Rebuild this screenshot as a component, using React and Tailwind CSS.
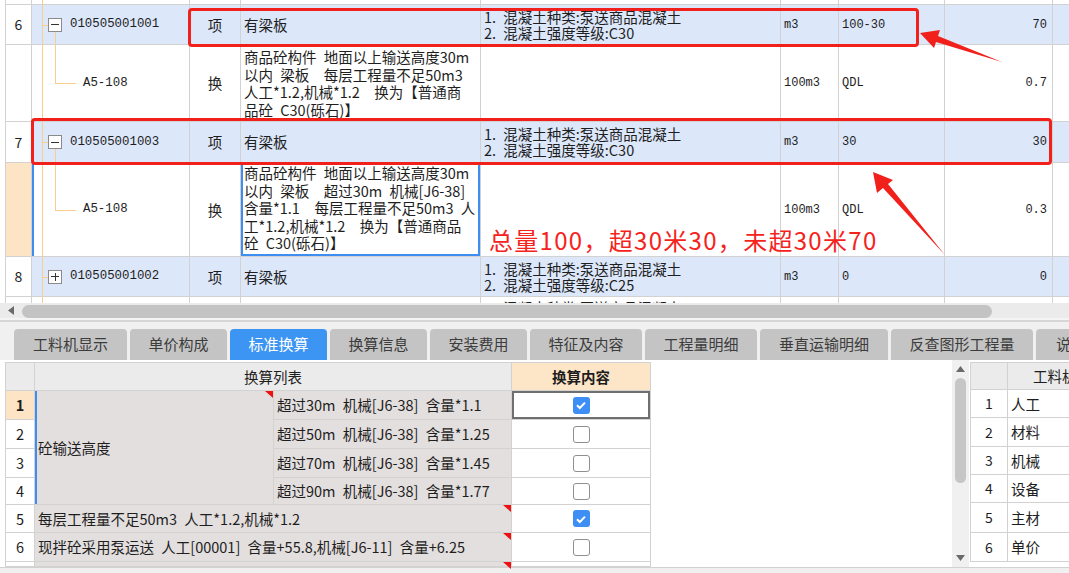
import React from "react";

const LINE = "border-[#d2d2d2]";
const CJK = "font-['Noto_Sans_CJK_SC',sans-serif]";
const MONO = "font-['Liberation_Mono','Noto_Sans_CJK_SC',monospace]";
const ITEM_BG = "bg-[#dce7fa]";
const S = "\u2002";

const TreeBox = ({ sign }) => (
  <span className="absolute left-[16px] top-1/2 -translate-y-1/2 w-[14px] h-[14px] border border-[#8a8a8a] bg-white flex items-center justify-center">
    <span className="absolute w-[8px] h-[1px] bg-[#333]" />
    {sign === "+" && <span className="absolute w-[1px] h-[8px] bg-[#333]" />}
  </span>
);

const ItemRow = ({ h, num, code, sign, feature, expr, qty, expanded }) => (
  <div className={`flex ${h} border-b ${LINE} ${ITEM_BG} shrink-0`}>
    <div className={`w-[26px] shrink-0 border-r ${LINE} bg-white flex items-center justify-center text-[14px]`}>{num}</div>
    <div className={`w-[158px] shrink-0 border-r ${LINE} relative flex items-center pl-[38px] ${MONO} text-[12.4px]`}>
      <span className="absolute left-[11px] top-1/2 w-[5px] h-[1px] bg-[#f9cc90]" />
      {expanded && <span className="absolute left-[23px] top-[calc(50%+7px)] bottom-0 w-[1px] bg-[#f9cc90]" />}
      <TreeBox sign={sign} />
      {code}
    </div>
    <div className={`w-[51px] shrink-0 border-r ${LINE} flex items-center justify-center`}>项</div>
    <div className={`w-[240px] shrink-0 border-r ${LINE} flex items-center pl-[3px]`}>有梁板</div>
    <div className={`w-[300px] shrink-0 border-r ${LINE} flex flex-col justify-center pl-[3px] leading-[16px] whitespace-pre`}>
      <div>{`1.${S}混凝土种类:泵送商品混凝土`}</div>
      <div>{`2.${S}混凝土强度等级:${feature}`}</div>
    </div>
    <div className={`w-[58px] shrink-0 border-r ${LINE} flex items-center pl-[3px] ${MONO} text-[12px]`}>m3</div>
    <div className={`w-[106px] shrink-0 border-r ${LINE} flex items-center pl-[3px] ${MONO} text-[12px]`}>{expr}</div>
    <div className={`w-[108px] shrink-0 border-r ${LINE} flex items-center justify-end pr-[5px] ${MONO} text-[12px]`}>{qty}</div>
    <div className="flex-1" />
  </div>
);

const ChildRow = ({ h, lines, pt, qty, selected }) => (
  <div className={`flex ${h} border-b ${LINE} bg-white shrink-0`}>
    <div className={`w-[26px] shrink-0 border-r ${LINE} ${selected ? "bg-[#fde4c5]" : "bg-white"}`} />
    <div className={`w-[158px] shrink-0 border-r ${LINE} relative flex items-center pl-[51px] ${MONO} text-[12.4px] ${selected ? "shadow-[inset_2px_0_0_#3d8ef0]" : ""}`}>
      <span className="absolute left-[23px] top-0 h-1/2 w-[1px] bg-[#f9cc90]" />
      <span className="absolute left-[23px] top-1/2 w-[21px] h-[1px] bg-[#f9cc90]" />
      A5-108
    </div>
    <div className={`w-[51px] shrink-0 border-r ${LINE} flex items-center justify-center`}>换</div>
    <div className={`w-[240px] shrink-0 border-r ${LINE} pl-[3px] ${pt} leading-[17.5px] whitespace-pre overflow-hidden ${selected ? "shadow-[inset_0_0_0_2px_#3d8ef0]" : ""}`}>
      {lines.map((l, i) => (
        <div key={i}>{l}</div>
      ))}
    </div>
    <div className={`w-[300px] shrink-0 border-r ${LINE}`} />
    <div className={`w-[58px] shrink-0 border-r ${LINE} flex items-center pl-[3px] ${MONO} text-[12px]`}>100m3</div>
    <div className={`w-[106px] shrink-0 border-r ${LINE} flex items-center pl-[3px] ${MONO} text-[12px]`}>QDL</div>
    <div className={`w-[108px] shrink-0 border-r ${LINE} flex items-center justify-end pr-[5px] ${MONO} text-[12px]`}>{qty}</div>
    <div className="flex-1" />
  </div>
);

const Check = ({ on }) =>
  on ? (
    <span className="w-[17px] h-[17px] rounded-[3px] bg-[#3d8ef5] flex items-center justify-center">
      <svg width="12" height="12" viewBox="0 0 12 12">
        <path d="M2 6.2l2.8 2.8L10 3.6" fill="none" stroke="white" strokeWidth="2" />
      </svg>
    </span>
  ) : (
    <span className="w-[17px] h-[17px] rounded-[3px] border-[1.5px] border-[#8f8f8f] bg-white" />
  );

const RedTri = () => (
  <span className="absolute right-0 top-0 w-[8px] h-[7px] bg-[#ee1111] [clip-path:polygon(0_0,100%_0,100%_100%)]" />
);

const TABS = [
  ["工料机显示", "w-[113px]"],
  ["单价构成", "w-[97px]"],
  ["标准换算", "w-[97px]"],
  ["换算信息", "w-[97px]"],
  ["安装费用", "w-[97px]"],
  ["特征及内容", "w-[112px]"],
  ["工程量明细", "w-[112px]"],
  ["垂直运输明细", "w-[128px]"],
  ["反查图形工程量", "w-[142px]"],
  ["说明信息", "w-[100px]"],
];

const SUBS = [
  [`超过30m${S}机械[J6-38]${S}含量*1.1`, true],
  [`超过50m${S}机械[J6-38]${S}含量*1.25`, false],
  [`超过70m${S}机械[J6-38]${S}含量*1.45`, false],
  [`超过90m${S}机械[J6-38]${S}含量*1.77`, false],
];

const RIGHT = ["人工", "材料", "机械", "设备", "主材", "单价"];

export default function App() {
  const cell = `border-r border-b ${LINE}`;
  return (
    <div className={`relative w-[1069px] h-[573px] overflow-hidden bg-white text-[#1e1e1e] text-[14.5px] ${CJK}`}>
      {/* top grid */}
      <div className="relative h-[303px] pl-[5px] flex flex-col overflow-hidden">
        <div className={`flex h-[5px] border-b ${LINE} shrink-0 border-l`}>
          <div className={`w-[26px] border-r ${LINE}`} />
          <div className={`w-[158px] border-r ${LINE}`} />
          <div className={`w-[51px] border-r ${LINE}`} />
          <div className={`w-[240px] border-r ${LINE}`} />
          <div className={`w-[300px] border-r ${LINE}`} />
          <div className={`w-[58px] border-r ${LINE}`} />
          <div className={`w-[106px] border-r ${LINE}`} />
          <div className={`w-[108px] border-r ${LINE}`} />
        </div>
        <div className={`flex flex-col border-l ${LINE}`}>
          <ItemRow h="h-[40px]" num="6" code="010505001001" sign="-" feature="C30" expr="100-30" qty="70" expanded />
          <ChildRow
            h="h-[77px]"
            pt="pt-[3px]"
            qty="0.7"
            lines={[
              `商品砼构件${S}地面以上输送高度30m`,
              `以内${S}梁板${S}${S}每层工程量不足50m3`,
              `人工*1.2,机械*1.2${S}${S}换为【普通商`,
              `品砼${S}C30(砾石)】`,
            ]}
          />
          <ItemRow h="h-[41px]" num="7" code="010505001003" sign="-" feature="C30" expr="30" qty="30" expanded />
          <ChildRow
            h="h-[94px]"
            pt="pt-[1px]"
            qty="0.3"
            selected
            lines={[
              `商品砼构件${S}地面以上输送高度30m`,
              `以内${S}梁板${S}${S}超过30m${S}机械[J6-38]`,
              `含量*1.1${S}${S}每层工程量不足50m3${S}人`,
              `工*1.2,机械*1.2${S}${S}换为【普通商品`,
              `砼${S}C30(砾石)】`,
            ]}
          />
          <ItemRow h="h-[40px]" num="8" code="010505001002" sign="+" feature="C25" expr="0" qty="0" />
          <div className="flex h-[12px] bg-white shrink-0">
            <div className={`w-[26px] shrink-0 border-r ${LINE}`} />
            <div className={`w-[158px] shrink-0 border-r ${LINE}`} />
            <div className={`w-[51px] shrink-0 border-r ${LINE}`} />
            <div className={`w-[240px] shrink-0 border-r ${LINE}`} />
            <div className={`w-[300px] shrink-0 border-r ${LINE} pl-[3px] pt-[3px] leading-[16px] whitespace-pre`}>{`1.${S}混凝土种类:泵送商品混凝土`}</div>
            <div className={`w-[58px] shrink-0 border-r ${LINE}`} />
            <div className={`w-[106px] shrink-0 border-r ${LINE}`} />
            <div className={`w-[108px] shrink-0 border-r ${LINE}`} />
          </div>
        </div>
        <span className="absolute left-[42px] top-0 h-[303px] w-[1px] bg-[#f9cc90]" />
      </div>

      {/* horizontal scrollbar */}
      <div className="h-[15px] bg-[#ebebeb] flex items-end">
        <div className="w-[22px] h-[15px] flex items-center justify-center">
          <svg width="6" height="9" viewBox="0 0 6 9">
            <path d="M6 0L0 4.5 6 9z" fill="#6a6a6a" />
          </svg>
        </div>
        <div className="w-[970px] h-[13px] rounded-full bg-[#c3c3c3]" />
      </div>

      {/* tab strip */}
      <div className="h-[42px] bg-[#f0f0f0] flex flex-col">
        <div className="h-[2px] bg-[#f4f4f4]" />
        <div className="h-[2px] bg-[#d6d6d6]" />
        <div className="flex-1 flex items-end pl-[14px] gap-[3px] overflow-hidden">
          {TABS.map(([t, w], i) => (
            <div
              key={t}
              className={`${w} shrink-0 h-[31px] rounded-t-[4px] flex items-center justify-center text-[15px] whitespace-nowrap ${
                i === 2 ? "bg-[#3d95f3] text-white" : "bg-[#c4c4c4] text-[#3c3c3c]"
              }`}
            >
              {t}
            </div>
          ))}
        </div>
      </div>

      {/* bottom panel */}
      <div className="flex h-[207px] bg-white">
        <div className="w-[5px] shrink-0" />
        <div className={`mt-[2px] grid grid-cols-[29px_239px_238px_139px] grid-rows-[29px_29px_29px_29px_27px_28px_29px_5px] border-l ${LINE} shrink-0`}>
          <div className={`${cell} border-t bg-[#ebebeb]`} />
          <div className={`${cell} border-t bg-[#ebebeb] col-span-2 flex items-center justify-center`}>换算列表</div>
          <div className={`${cell} border-t bg-[#fde5c8] flex items-center justify-center font-bold`}>换算内容</div>

          <div className={`${cell} bg-[#fde4c5] flex items-center justify-center font-bold`}>1</div>
          <div className={`${cell} row-span-4 bg-[#e3dfde] relative flex items-center pl-[3px] shadow-[inset_2px_0_0_#3d8ef0]`}>
            砼输送高度
            <RedTri />
          </div>
          {SUBS.map(([t, on], i) => (
            <React.Fragment key={t}>
              {i > 0 && <div className={`${cell} flex items-center justify-center`}>{i + 1}</div>}
              <div className={`${cell} bg-[#e3dfde] flex items-center pl-[3px] whitespace-pre`}>{t}</div>
              <div className={`${cell} flex items-center justify-center ${i === 0 ? "shadow-[inset_0_0_0_2px_#6f6f6f]" : ""}`}>
                <Check on={on} />
              </div>
            </React.Fragment>
          ))}

          <div className={`${cell} flex items-center justify-center`}>5</div>
          <div className={`${cell} col-span-2 bg-[#e3dfde] relative flex items-center pl-[3px] whitespace-pre`}>
            {`每层工程量不足50m3${S}人工*1.2,机械*1.2`}
            <RedTri />
          </div>
          <div className={`${cell} flex items-center justify-center`}>
            <Check on />
          </div>

          <div className={`${cell} flex items-center justify-center`}>6</div>
          <div className={`${cell} col-span-2 bg-[#e3dfde] relative flex items-center pl-[3px] whitespace-pre overflow-hidden`}>
            {`现拌砼采用泵运送${S}人工[00001]${S}含量+55.8,机械[J6-11]${S}含量+6.25`}
            <RedTri />
          </div>
          <div className={`${cell} flex items-center justify-center`}>
            <Check />
          </div>

          <div className={cell} />
          <div className={`${cell} col-span-2 bg-[#e3dfde] relative`}>
            <RedTri />
          </div>
          <div className={cell} />
        </div>

        <div className="w-[301px] shrink-0" />

        {/* vertical scrollbar */}
        <div className="w-[17px] shrink-0 bg-[#f0f0f0] flex flex-col items-center">
          <svg className="mt-[6px]" width="9" height="6" viewBox="0 0 9 6">
            <path d="M0 6L4.5 0 9 6z" fill="#6a6a6a" />
          </svg>
          <div className="mt-[6px] w-[11px] h-[105px] rounded-full bg-[#c6c6c6]" />
          <div className="flex-1" />
          <svg className="mb-[6px]" width="9" height="6" viewBox="0 0 9 6">
            <path d="M0 0L4.5 6 9 0z" fill="#6a6a6a" />
          </svg>
        </div>

        <div className={`ml-[1px] mt-[2px] flex-1 grid grid-cols-[37px_1fr] grid-rows-[28px_28px_29px_28px_28px_30px_29px] border-l ${LINE} self-start`}>
          <div className={`${cell} border-t bg-[#ebebeb]`} />
          <div className={`border-b border-t ${LINE} bg-[#ebebeb] flex items-center pl-[25px] whitespace-nowrap overflow-hidden`}>工料机名称</div>
          {RIGHT.map((t, i) => (
            <React.Fragment key={t}>
              <div className={`${cell} flex items-center justify-center text-[14px]`}>{i + 1}</div>
              <div className={`border-b ${LINE} flex items-center pl-[3px]`}>{t}</div>
            </React.Fragment>
          ))}
        </div>
      </div>

      <div className={`h-[6px] bg-[#f0f0f0] border-t ${LINE}`} />

      {/* annotations */}
      <div className="absolute left-[188px] top-[8px] w-[731px] h-[39px] border-[3px] border-[#f2201b] rounded-[4px] pointer-events-none" />
      <div className="absolute left-[31px] top-[118px] w-[1021px] h-[47px] border-[3px] border-[#f2201b] rounded-[4px] pointer-events-none" />
      <svg className="absolute left-0 top-0 pointer-events-none" width="1069" height="573" viewBox="0 0 1069 573">
        <polygon points="920,33 940,30 938,36 1002,62 936,42 934,48" fill="#f2201b" />
        <polygon points="873,172 893,180 888,184 945,255 883,188 877,193" fill="#f2201b" />
      </svg>
      <div className="absolute left-[489px] top-[228px] text-[24px] leading-none text-[#f5231c] whitespace-nowrap tracking-[1.3px]">
        总量100，超30米30，未超30米70
      </div>
    </div>
  );
}
